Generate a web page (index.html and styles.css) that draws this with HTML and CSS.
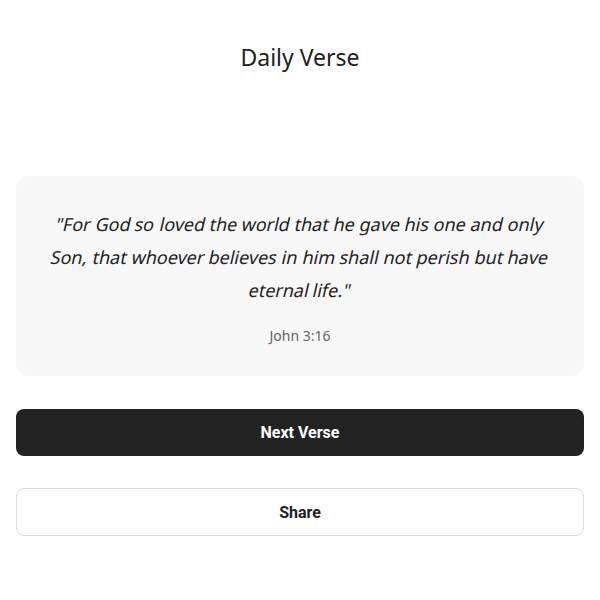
FILE: index.html
```html
<!DOCTYPE HTML>
<html>
<head>
<meta charset="UTF-8" />
<title>Daily Verse</title>
<link rel="stylesheet" href="styles.css">
</head>
<body>
<div class="page">
	<div class="header"><h1>Daily Verse</h1></div>

	<div class="card">
		<p class="verse">
			<span class="w">"For</span> <span class="w">God</span> <span class="w">so</span> <span class="w">loved</span> <span class="w">the</span> <span class="w">world</span> <span class="w">that</span> <span class="w">he</span> <span class="w">gave</span> <span class="w">his</span> <span class="w">one</span> <span class="w">and</span> <span class="w">only</span>
			<span class="w">Son,</span> <span class="w">that</span> <span class="w">whoever</span> <span class="w">believes</span> <span class="w">in</span> <span class="w">him</span> <span class="w">shall</span> <span class="w">not</span> <span class="w">perish</span> <span class="w">but</span> <span class="w">have</span>
			<span class="w">eternal</span> <span class="w">life."</span>
		</p>
		<p class="reference">John 3:16</p>
	</div>

	<div class="actions">
		<button class="btn primary">Next Verse</button>
		<button class="btn secondary">Share</button>
	</div>
</div>
</body>
</html>
```

FILE: styles.css
```css
html,
body {
	margin: 0;
	padding: 0;
	background: #fff;
	color: #222;
	font-family: "Noto Sans", sans-serif;
}

.page {
	padding: 16px;
	display: flex;
	flex-direction: column;
}

.header h1 {
	margin: 25px 0 0 0;
	font-size: 23px;
	line-height: 32px;
	font-weight: 400;
	text-align: center;
}

.card {
	margin-top: 103px;
	background-color: #f7f7f7;
	border-radius: 12px;
	padding: 32px 32px 30px;
	text-align: center;
}

.verse {
	margin: 0;
	font-size: 18px;
	line-height: 33px;
}

/* slanted regular face, like the browser's fake italic */
.verse .w {
	display: inline-block;
	transform: skewX(-13deg);
}

.reference {
	margin: 18px 0 0 0;
	font-size: 14px;
	line-height: 21px;
	color: #666;
}

.actions {
	margin-top: 33px;
	display: flex;
	flex-direction: column;
	gap: 32px;
}

.btn {
	height: 48px;
	border-radius: 8px;
	font-family: Roboto, sans-serif;
	font-size: 16px;
	font-weight: 700;
	cursor: pointer;
}

.primary {
	background-color: #222;
	color: #fff;
	border: none;
	height: 47px;
}

.secondary {
	background-color: #fff;
	color: #222;
	border: 1px solid #ddd;
}
```
